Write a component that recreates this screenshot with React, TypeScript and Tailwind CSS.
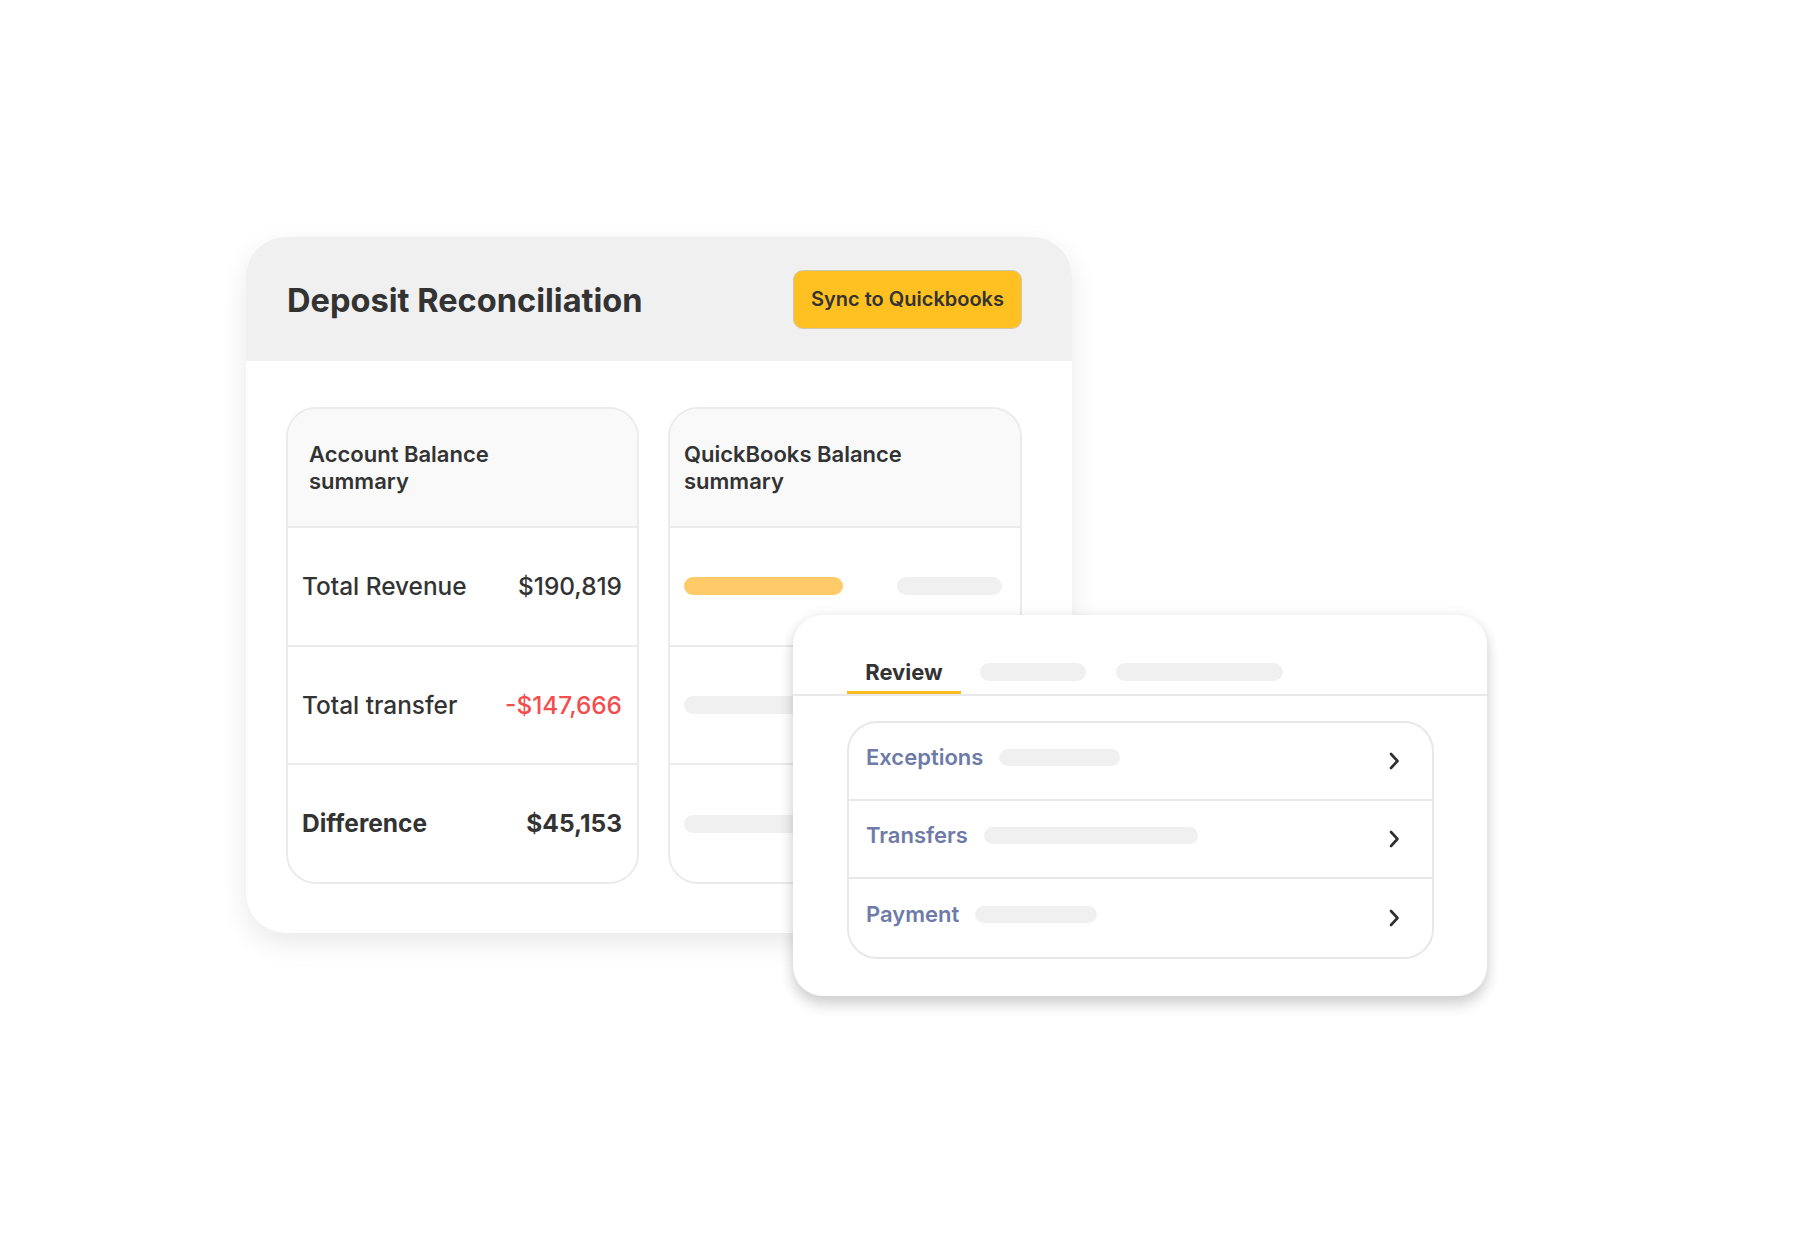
import React from "react";

const font = { fontFamily: "Inter, 'Noto Sans', sans-serif" };

function Chevron() {
  return (
    <svg width="12" height="18" viewBox="0 0 12 18" fill="none" className="shrink-0">
      <polyline points="3,2 9.5,9 3,16" stroke="#2f2f2f" strokeWidth="2.6" strokeLinecap="round" strokeLinejoin="round" />
    </svg>
  );
}

function SummaryRow({ label, value, valueClass, bold }: { label: string; value: string; valueClass?: string; bold?: boolean }) {
  return (
    <div className="flex-1 border-t-2 border-[#ebebeb] flex items-center justify-between pl-[14px] pr-[15px]">
      <span className={`${bold ? "text-[24.5px] font-bold" : "text-[24.4px] font-medium"} text-[#333]`}>{label}</span>
      <span className={`${bold ? "text-[24.5px] font-bold" : "text-[24.4px] font-medium"} ${valueClass ?? "text-[#333]"}`}>{value}</span>
    </div>
  );
}

function ListRow({ label, bar, last }: { label: string; bar: number; last?: boolean }) {
  return (
    <div className={`h-[78px] flex items-center justify-between pl-[17px] pr-[32px] ${last ? "" : "border-b-2 border-[#e8e8e8]"}`}>
      <div className="flex items-center gap-[16px] -mt-[8px]">
        <span className="text-[22px] font-semibold text-[#6e7aa8]">{label}</span>
        <div className="h-[17px] rounded-full bg-[#f0f0f0]" style={{ width: bar }} />
      </div>
      <Chevron />
    </div>
  );
}

export default function App() {
  return (
    <div className="w-[1807px] h-[1234px] bg-white overflow-hidden" style={font}>
      <div className="pt-[237px] pl-[246px]">
        <div className="relative w-[826px]">
          <div className="w-[826px] h-[696px] rounded-[40px] bg-white overflow-hidden shadow-[0_10px_28px_rgba(0,0,0,0.09)]">
            <div className="h-[124px] bg-[#f0f0f0] flex items-center justify-between pl-[41px] pr-[50px]">
              <h1 className="text-[32.6px] font-bold text-[#333] leading-none mt-[3px]">Deposit Reconciliation</h1>
              <div className="w-[229px] h-[59px] rounded-[10px] bg-[#ffc021] border border-[#cfc6ae] flex items-center justify-center text-[20px] font-semibold text-[#333]">
                Sync to Quickbooks
              </div>
            </div>
            <div className="flex gap-[29px] pt-[46px] pl-[40px] pr-[50px]">
              <div className="w-[353px] h-[477px] border-2 border-[#ebebeb] rounded-[30px] overflow-hidden flex flex-col">
                <div className="h-[117px] shrink-0 bg-[#f9f9f9] flex items-center px-[21px]">
                  <span className="text-[22px] font-semibold text-[#333] leading-[27px]">
                    Account Balance
                    <br />
                    summary
                  </span>
                </div>
                <SummaryRow label="Total Revenue" value="$190,819" />
                <SummaryRow label="Total transfer" value="-$147,666" valueClass="text-[#f24e4e]" />
                <SummaryRow label="Difference" value="$45,153" bold />
              </div>
              <div className="w-[354px] h-[477px] border-2 border-[#ebebeb] rounded-[30px] overflow-hidden flex flex-col">
                <div className="h-[117px] shrink-0 bg-[#f9f9f9] flex items-center px-[14px]">
                  <span className="text-[22px] font-semibold text-[#333] leading-[27px]">
                    QuickBooks Balance
                    <br />
                    summary
                  </span>
                </div>
                <div className="flex-1 border-t-2 border-[#ebebeb] flex items-center justify-between pl-[14px] pr-[18px]">
                  <div className="w-[159px] h-[18px] rounded-full bg-[#ffcb69]" />
                  <div className="w-[105px] h-[18px] rounded-full bg-[#f0f0f0]" />
                </div>
                <div className="flex-1 border-t-2 border-[#ebebeb] flex items-center pl-[14px]">
                  <div className="w-[200px] h-[18px] rounded-full bg-[#f0f0f0]" />
                </div>
                <div className="flex-1 border-t-2 border-[#ebebeb] flex items-center pl-[14px]">
                  <div className="w-[200px] h-[18px] rounded-full bg-[#f0f0f0]" />
                </div>
              </div>
            </div>
          </div>

          <div className="absolute left-[547px] top-[378px] w-[694px] h-[381px] rounded-[30px] bg-white shadow-[0_9px_14px_rgba(0,0,0,0.16),0_0_14px_rgba(0,0,0,0.07)] flex flex-col">
            <div className="h-[81px] shrink-0 border-b-2 border-[#e8e8e8] flex pl-[54px]">
              <div className="h-full w-[114px] pt-[38px] flex items-center justify-center border-b-[3px] border-[#f8bd1e]">
                <span className="text-[22px] font-bold text-[#333] leading-none">Review</span>
              </div>
              <div className="ml-[19px] mt-[48px] w-[106px] h-[18px] rounded-full bg-[#f0f0f0]" />
              <div className="ml-[30px] mt-[48px] w-[167px] h-[18px] rounded-full bg-[#f0f0f0]" />
            </div>
            <div className="pt-[25px] pl-[54px] pr-[53px]">
              <div className="border-2 border-[#e8e8e8] rounded-[30px] overflow-hidden">
                <ListRow label="Exceptions" bar={121} />
                <ListRow label="Transfers" bar={214} />
                <ListRow label="Payment" bar={122} last />
              </div>
            </div>
          </div>
        </div>
      </div>
    </div>
  );
}
